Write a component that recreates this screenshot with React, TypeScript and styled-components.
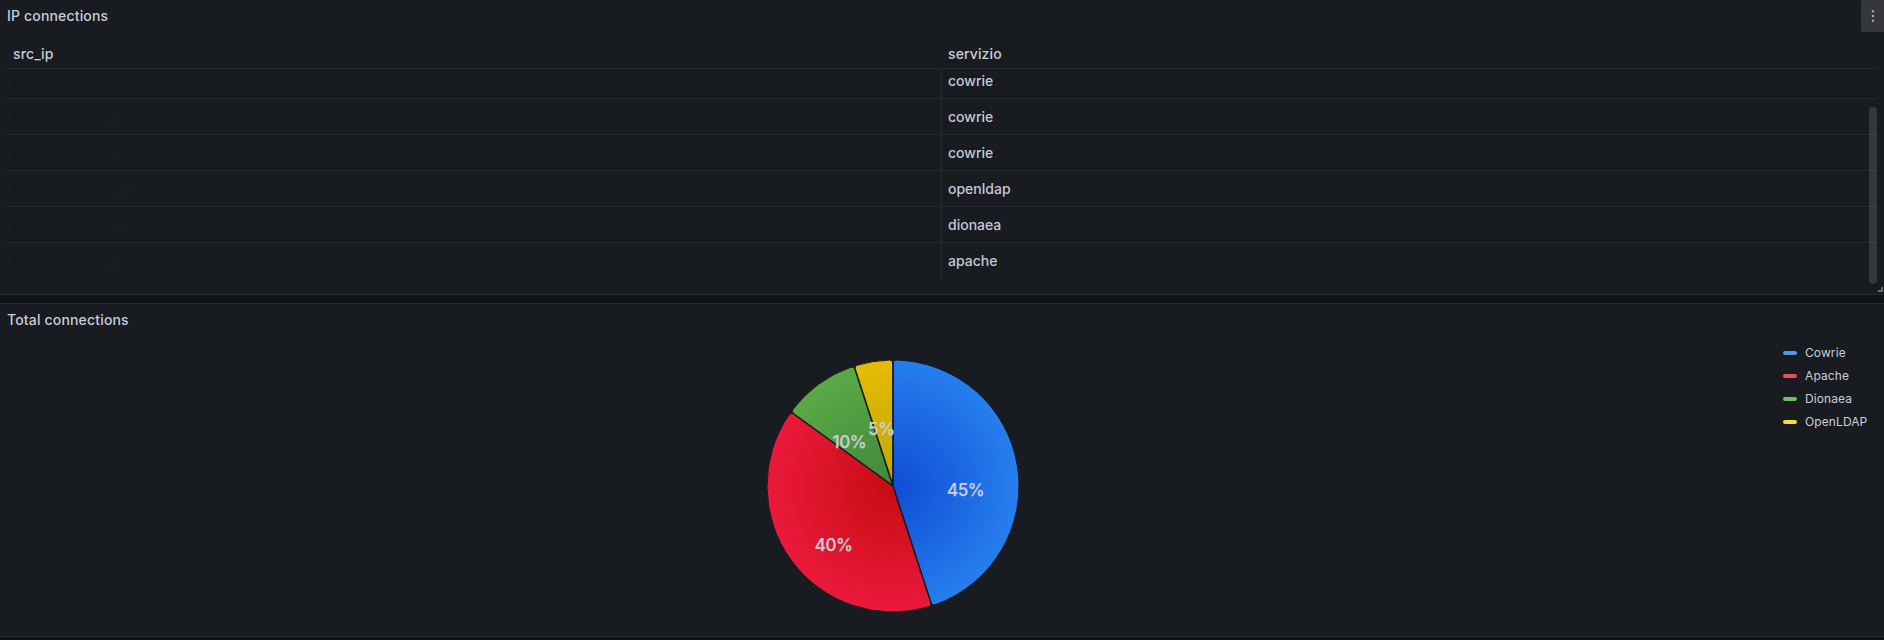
import React from "react";
import styled, { createGlobalStyle } from "styled-components";

const GlobalStyle = createGlobalStyle`
  * { box-sizing: border-box; }
  body {
    margin: 0;
    background: #111217;
    color: #ccccdc;
    font-family: Inter, "Liberation Sans", sans-serif;
    font-size: 14px;
    letter-spacing: 0.15px;
    overflow: hidden;
  }
`;

const Dashboard = styled.main`
  display: flex;
  flex-direction: column;
  gap: 8px;
  height: 640px;
`;

const Panel = styled.section<{ $height: number; $first?: boolean }>`
  position: relative;
  display: flex;
  flex-direction: column;
  height: ${(p) => p.$height}px;
  background: #181b1f;
  border-bottom: 1px solid #292b30;
  border-top: ${(p) => (p.$first ? "0" : "1px solid #292b30")};
`;

const PanelHeader = styled.header`
  display: flex;
  justify-content: space-between;
  height: 32px;
  flex: none;
  padding-left: 7px;
`;

const PanelTitle = styled.h2`
  margin: 0;
  font-size: 14px;
  font-weight: 500;
  line-height: 32px;
  letter-spacing: 0.17px;
`;

const MenuButton = styled.button`
  display: flex;
  align-items: center;
  justify-content: center;
  width: 23px;
  height: 32px;
  padding: 0;
  border: 0;
  border-radius: 2px 0 0 2px;
  background: #35373b;
`;

const Table = styled.div`
  position: relative;
  display: flex;
  flex-direction: column;
  height: 252px;
  margin: 0 7px;
`;

const HeadRow = styled.div`
  display: grid;
  grid-template-columns: 935px 1fr;
  flex: none;
  height: 37px;
  border-bottom: 1px solid #25282c;
`;

const HeadCell = styled.div`
  padding: 0 6px;
  font-weight: 500;
  line-height: 44px;
  letter-spacing: 0.12px;
`;

const Body = styled.div`
  display: flex;
  flex-direction: column;
  justify-content: flex-end;
  height: 210px;
  overflow: hidden;
`;

const Row = styled.div`
  display: grid;
  grid-template-columns: 935px 1fr;
  flex: none;
  height: 36px;
  border-bottom: 1px solid #25282c;
  &:last-child {
    border-bottom-color: transparent;
  }
`;

const Cell = styled.div<{ $divided?: boolean }>`
  display: flex;
  align-items: center;
  padding: 0 6px;
  height: 36px;
  line-height: 36px;
  font-weight: 500;
  letter-spacing: 0;
  color: #c6c6d6;
  border-right: ${(p) => (p.$divided ? "1px solid #25282c" : "0")};
`;

const Smear = styled.span<{ $width: number }>`
  width: ${(p) => p.$width}px;
  height: 14px;
  border-radius: 7px;
  background: linear-gradient(90deg, #171a1d, #181c1e 50%, #191d1f);
`;

const ScrollThumb = styled.div`
  position: absolute;
  right: 0;
  top: 75px;
  width: 8px;
  height: 177px;
  border-radius: 4px;
  background: rgba(204, 204, 220, 0.16);
`;

const ResizeHandle = styled.div`
  position: absolute;
  right: 1px;
  bottom: 2px;
  width: 5px;
  height: 5px;
  border-right: 2px solid #67696b;
  border-bottom: 2px solid #67696b;
`;

const ChartArea = styled.div`
  display: flex;
  flex: 1;
  min-height: 0;
`;

const PlotColumn = styled.div`
  display: flex;
  justify-content: center;
  width: 1783px;
  flex: none;
  padding: 22px 0 0 3px;
`;

const Pie = styled.svg`
  display: block;
  overflow: visible;
`;

const SliceLabel = styled.text`
  fill: #ccccdc;
  stroke: #ccccdc;
  stroke-width: 0.25px;
  font-size: 17px;
  font-weight: 500;
  letter-spacing: -0.4px;
  text-anchor: middle;
`;

const Legend = styled.ul`
  display: flex;
  flex-direction: column;
  margin: 0;
  padding: 5px 0 0;
  list-style: none;
  font-size: 12px;
  letter-spacing: 0.1px;
`;

const LegendItem = styled.li`
  display: flex;
  align-items: center;
  gap: 8px;
  height: 23px;
`;

const Swatch = styled.span<{ $color: string }>`
  width: 14px;
  height: 4px;
  border-radius: 2px;
  background: ${(p) => p.$color};
`;

const services = ["cowrie", "cowrie", "cowrie", "openldap", "dionaea", "apache"];
const smears = [98, 108, 104, 120, 112, 108];

const RADIUS = 126;
const CORNER = 3;
const PAD = 0.35;

const slices = [
  { name: "Cowrie", pct: 45, legend: "#5794f2", from: "#104dd5", to: "#267eed", x: 72.6, y: 10.3 },
  { name: "Apache", pct: 40, legend: "#f2495c", from: "#c70d12", to: "#eb193b", x: -59.4, y: 65.3 },
  { name: "Dionaea", pct: 10, legend: "#73bf69", from: "#40883c", to: "#5aa946", x: -43.6, y: -37.8 },
  { name: "OpenLDAP", pct: 5, legend: "#fade2a", from: "#bca800", to: "#e6bb05", x: -11.6, y: -50.8 },
];

/* Sector outline with parallel padding on both edges and rounded outer corners. */
function slicePath(start: number, end: number) {
  const a0 = start * 2 * Math.PI;
  const a1 = end * 2 * Math.PI;
  const dir = (a: number) => [Math.sin(a), -Math.cos(a)];
  const nrm = (a: number) => [Math.cos(a), Math.sin(a)];
  const along = Math.sqrt((RADIUS - CORNER) ** 2 - (PAD + CORNER) ** 2);
  const k = RADIUS / (RADIUS - CORNER);
  const point = (a: number, side: number, offset: number, scale = 1) => {
    const d = dir(a);
    const n = nrm(a);
    return [0, 1].map((i) => ((d[i] * along + n[i] * offset * side) * scale).toFixed(3)).join(" ");
  };
  const mid = (a0 + a1) / 2;
  const apex = dir(mid).map((v) => ((v * PAD) / Math.sin((a1 - a0) / 2)).toFixed(3)).join(" ");
  return [
    `M${apex}`,
    `L${point(a0, 1, PAD)}`,
    `A${CORNER} ${CORNER} 0 0 1 ${point(a0, 1, PAD + CORNER, k)}`,
    `A${RADIUS} ${RADIUS} 0 0 1 ${point(a1, -1, PAD + CORNER, k)}`,
    `A${CORNER} ${CORNER} 0 0 1 ${point(a1, -1, PAD)}`,
    "Z",
  ].join("");
}

function PieChart() {
  let total = 0;
  const arcs = slices.map((s) => {
    const start = total;
    total += s.pct / 100;
    return { ...s, d: slicePath(start, total) };
  });
  return (
    <Pie width="256" height="256" viewBox="-128 -128 256 256">
      <defs>
        {arcs.map((s) => (
          <radialGradient key={s.name} id={`fill-${s.name}`} gradientUnits="userSpaceOnUse" cx="0" cy="0" r={RADIUS}>
            <stop offset="0" stopColor={s.from} />
            <stop offset="1" stopColor={s.to} />
          </radialGradient>
        ))}
      </defs>
      {arcs.map((s) => (
        <path key={s.name} d={s.d} fill={`url(#fill-${s.name})`} stroke="#181b1f" strokeWidth="1" />
      ))}
      {arcs.map((s) => (
        <SliceLabel key={s.name} x={s.x} y={s.y}>{`${s.pct}%`}</SliceLabel>
      ))}
    </Pie>
  );
}

export default function App() {
  return (
    <>
      <GlobalStyle />
      <Dashboard>
        <Panel $height={295} $first>
          <PanelHeader>
            <PanelTitle>IP connections</PanelTitle>
            <MenuButton aria-label="Menu">
              <svg width="4" height="14" viewBox="0 0 4 14" fill="#a3a4aa">
                <circle cx="2" cy="2.3" r="1.25" />
                <circle cx="2" cy="7" r="1.25" />
                <circle cx="2" cy="11.7" r="1.25" />
              </svg>
            </MenuButton>
          </PanelHeader>
          <Table>
            <HeadRow>
              <HeadCell>src_ip</HeadCell>
              <HeadCell>servizio</HeadCell>
            </HeadRow>
            <Body>
              {services.map((service, i) => (
                <Row key={i}>
                  <Cell $divided>
                    <Smear $width={smears[i]} />
                  </Cell>
                  <Cell>{service}</Cell>
                </Row>
              ))}
            </Body>
            <ScrollThumb />
          </Table>
          <ResizeHandle />
        </Panel>
        <Panel $height={334}>
          <PanelHeader>
            <PanelTitle>Total connections</PanelTitle>
          </PanelHeader>
          <ChartArea>
            <PlotColumn>
              <PieChart />
            </PlotColumn>
            <Legend>
              {slices.map((s) => (
                <LegendItem key={s.name}>
                  <Swatch $color={s.legend} />
                  {s.name}
                </LegendItem>
              ))}
            </Legend>
          </ChartArea>
        </Panel>
      </Dashboard>
    </>
  );
}
